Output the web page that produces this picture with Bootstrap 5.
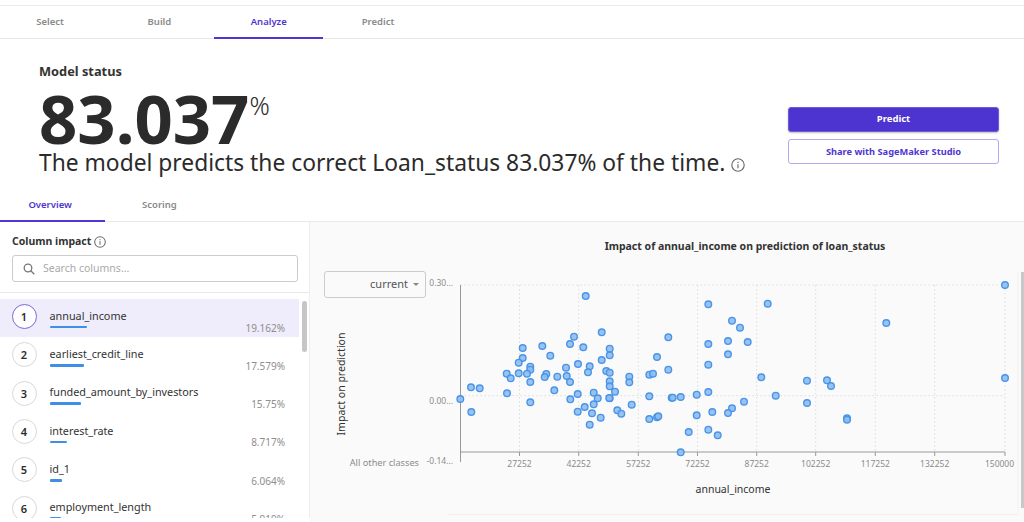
<!DOCTYPE html>
<html lang="en">
<head>
    <meta charset="UTF-8">
    <meta name="viewport" content="width=device-width, initial-scale=1.0">
    <title>Model status</title>
    <link href="https://cdn.jsdelivr.net/npm/bootstrap@5.3.0/dist/css/bootstrap.min.css" rel="stylesheet">
    <style>
        html, body { height: 522px; overflow: hidden; }
        body { font-family: "Noto Sans", "Liberation Sans", sans-serif; color: #2b2b2b; background: #fff; }
        .top-rule { height: 6px; border-bottom: 1px solid #eaeaea; }
        .step-tabs { height: 33px; border-bottom: 1px solid #e8e8e8; padding-left: 0; margin: 0; flex-wrap: nowrap; }
        .step-tab { width: 109.3px; text-align: center; font-size: 9.5px; font-weight: 600; color: #8a8a8a; line-height: 31px; height: 33px; }
        .step-tab:first-child { margin-left: -4.5px; }
        .step-tab.on { color: #4f35d2; border-bottom: 2px solid #4f35d2; }
        .head-block { height: 150px; padding: 23px 25px 0 39px; }
        .status-label { font-size: 12.8px; font-weight: 700; line-height: 18px; color: #333; }
        .big-score { font-size: 67px; font-weight: 700; line-height: 58px; margin-top: 9px; white-space: nowrap; }
        .big-score sup { font-size: 25px; font-weight: 300; top: -29px; vertical-align: baseline; position: relative; }
        .score-text { font-size: 22.8px; line-height: 30px; white-space: nowrap; margin-top: 1px; }
        .action-col { width: 211px; padding-top: 45px; }
        .btn-go, .btn-share { font-weight: 700; border-radius: 3px; padding: 0; width: 100%; display: block; }
        .btn-go { font-size: 9.5px; background: #4d33cf; color: #fff; height: 25px; border: 1px solid #6f5bd8; box-shadow: 0 1px 2px rgba(0,0,0,.25); }
        .btn-share { font-size: 9.25px; background: #fff; color: #4f35d2; height: 25px; margin-top: 7px; border: 1px solid #b4a8f0; }
        .left-pane { width: 310px; height: 296px; border-right: 1px solid #eee; overflow: hidden; position: relative; }
        .impact-title { font-size: 10.5px; font-weight: 700; color: #333; padding: 11px 0 0 12px; line-height: 16px; }
        .search-box { margin: 6px 11px 0 12px; height: 27px; border: 1px solid #ccc; border-radius: 3px; padding-left: 10px; font-size: 10.5px; color: #aaa; }
        .list-rule { border-bottom: 1px solid #e8e8e8; height: 11px; }
        .col-list { padding-top: 5.5px; width: 299px; }
        .col-row { height: 38.3px; padding: 0 14px 0 11.5px; position: relative; }
        .col-row.on { background: #efecfb; }
        .rank-dot { width: 25px; height: 25px; flex: none; border: 1px solid #d8d8d8; border-radius: 50%; background: #fff; font-size: 11px; font-weight: 600; text-align: center; line-height: 23px; margin-top: -2px; }
        .col-row.on .rank-dot { border-color: #7a66dd; }
        .col-name { font-size: 10.8px; line-height: 15px; margin-top: 1px; margin-left: 1px; white-space: nowrap; color: #333; }
        .col-bar { height: 2.5px; background: #3f8fe8; margin-top: 3px; margin-left: 1px; border-radius: 1px; }
        .col-pct { position: absolute; right: 14px; top: 22px; font-size: 10px; line-height: 14px; color: #8e8e8e; }
        .list-thumb { position: absolute; left: 302px; top: 79px; width: 5px; height: 51px; border-radius: 3px; background: #c6c6c6; }
        .right-pane { height: 300px; background: #fafafa; position: relative; min-width: 0; }
        .chart-title { font-size: 10.5px; font-weight: 700; text-align: center; color: #333; margin: 0; padding: 16px 0 0 156px; line-height: 16px; position: relative; }
        .chart-svg { display: block; position: absolute; left: 0; top: 0; }
        .chart-svg text { font-family: "Noto Sans", "Liberation Sans", sans-serif; }
        .class-select { position: absolute; left: 14px; top: 49px; width: 102px; height: 27px; border: 1px solid #ccc; border-radius: 3px; font-size: 11px; color: #555; padding-right: 6px; }
        .caret-down { width: 0; height: 0; border-left: 3.5px solid transparent; border-right: 3.5px solid transparent; border-top: 3.5px solid #888; margin-left: 5px; }
        .pane-thumb { position: absolute; right: 0; top: 50px; width: 3px; height: 236px; background: #c8c8c8; }
    </style>
</head>
<body>
    <div class="top-rule"></div>
    <div class="d-flex step-tabs">
        <div class="step-tab">Select</div>
        <div class="step-tab">Build</div>
        <div class="step-tab on">Analyze</div>
        <div class="step-tab">Predict</div>
    </div>
    <div class="d-flex justify-content-between head-block">
        <div>
            <div class="status-label">Model status</div>
            <div class="big-score">83.037<sup>%</sup></div>
            <div class="score-text">The model predicts the correct Loan_status 83.037% of the time.
                <svg width="14" height="14" viewBox="0 0 14 14" fill="none" stroke="#666" stroke-width="1.1"><circle cx="7" cy="7" r="6.2"/><path d="M7 6.2v4M7 3.8v1.1"/></svg>
            </div>
        </div>
        <div class="action-col flex-shrink-0">
            <button class="btn-go">Predict</button>
            <button class="btn-share">Share with SageMaker Studio</button>
        </div>
    </div>
    <div class="d-flex step-tabs">
        <div class="step-tab on">Overview</div>
        <div class="step-tab">Scoring</div>
    </div>
    <div class="d-flex">
        <div class="left-pane flex-shrink-0">
            <div class="impact-title">Column impact
                <svg width="12" height="12" viewBox="0 0 14 14" fill="none" stroke="#666" stroke-width="1.2"><circle cx="7" cy="7" r="6.2"/><path d="M7 6.2v4M7 3.8v1.1"/></svg>
            </div>
            <div class="search-box d-flex align-items-center gap-2">
                <svg width="12" height="12" viewBox="0 0 12 12" fill="none" stroke="#777" stroke-width="1.3"><circle cx="5" cy="5" r="3.8"/><path d="M7.8 7.8 11.3 11.3"/></svg>
                <span>Search columns...</span>
            </div>
            <div class="list-rule"></div>
            <div class="col-list">
                <div class="col-row on d-flex align-items-center gap-2"><div class="rank-dot me-1">1</div><div><div class="col-name">annual_income</div><div class="col-bar" style="width:37px"></div></div><div class="col-pct">19.162%</div></div>
                <div class="col-row d-flex align-items-center gap-2"><div class="rank-dot me-1">2</div><div><div class="col-name">earliest_credit_line</div><div class="col-bar" style="width:34px"></div></div><div class="col-pct">17.579%</div></div>
                <div class="col-row d-flex align-items-center gap-2"><div class="rank-dot me-1">3</div><div><div class="col-name">funded_amount_by_investors</div><div class="col-bar" style="width:31px"></div></div><div class="col-pct">15.75%</div></div>
                <div class="col-row d-flex align-items-center gap-2"><div class="rank-dot me-1">4</div><div><div class="col-name">interest_rate</div><div class="col-bar" style="width:17px"></div></div><div class="col-pct">8.717%</div></div>
                <div class="col-row d-flex align-items-center gap-2"><div class="rank-dot me-1">5</div><div><div class="col-name">id_1</div><div class="col-bar" style="width:12px"></div></div><div class="col-pct">6.064%</div></div>
                <div class="col-row d-flex align-items-center gap-2"><div class="rank-dot me-1">6</div><div><div class="col-name">employment_length</div><div class="col-bar" style="width:11px"></div></div><div class="col-pct">5.919%</div></div>
            </div>
            <div class="list-thumb"></div>
        </div>
        <div class="right-pane flex-grow-1">
            <svg class="chart-svg" id="chart" width="714" height="300" viewBox="310 222 714 300"></svg>
            <h6 class="chart-title">Impact of annual_income on prediction of loan_status</h6>
            <div class="class-select d-flex align-items-center justify-content-end">current<span class="caret-down"></span></div>
            <div class="pane-thumb"></div>
        </div>
    </div>
    <script>
        // points read off the picture, zoomed 3x from two crops
        const leftPts = [[797,198],[845,307],[762,320],[750,342],[667,348],[790,352],[608,354],[869,356],[869,376],[691,377],[608,384],[845,390],[596,398],[774,402],[631,410],[809,409],[738,413],[631,419],[859,423],[804,427],[869,428],[560,431],[596,430],[621,431],[679,432],[674,441],[712,440],[740,438],[572,445],[928,440],[869,454],[631,456],[750,456],[928,457],[869,469],[453,472],[479,475],[703,481],[885,485],[821,488],[561,490],[773,492],[833,505],[869,505],[868,504],[751,508],[421,507],[631,517],[821,523],[935,524],[794,531],[892,541],[454,546],[773,545],[816,550],[904,551],[842,563],[809,584],[988,434],[999,431],[1011,381],[1045,322],[1045,419],[988,499],[988,567],[1011,562],[1015,559],[1055,503]];
        const rightPts = [[115,223],[293,221],[1005,165],[186,272],[210,293],[649,279],[174,333],[233,336],[115,342],[174,373],[115,404],[274,442],[411,452],[471,451],[483,468],[1005,444],[115,486],[80,494],[32,501],[8,503],[317,497],[222,515],[411,519],[186,535],[127,546],[174,549],[80,556],[531,565],[531,569],[115,599],[56,606],[143,616],[32,667]];
        const gridX = [519.5, 578.7, 638.3, 697.5, 756.7, 815.7, 875.3, 934.7, 1005];
        const xLabels = ['27252', '42252', '57252', '72252', '87252', '102252', '117252', '132252', '150000'];

        let svg = '';
        gridX.forEach((x, i) => {
            const labelX = i === 8 ? 999.5 : x;
            svg += `<line x1="${x}" y1="285" x2="${x}" y2="452" stroke="#dcdcdc" stroke-dasharray="1.5 2.5"/>`;
            svg += `<line x1="${x}" y1="452" x2="${x}" y2="456" stroke="#999"/>`;
            svg += `<text x="${labelX}" y="467" font-size="8.5" fill="#8c8c8c" text-anchor="middle">${xLabels[i]}</text>`;
        });
        svg += '<line x1="460.5" y1="285" x2="1005" y2="285" stroke="#dcdcdc" stroke-dasharray="1.5 2.5"/>';
        svg += '<line x1="460.5" y1="395.7" x2="1005" y2="395.7" stroke="#dcdcdc" stroke-dasharray="1.5 2.5"/>';
        svg += '<line x1="460.5" y1="285" x2="460.5" y2="462" stroke="#999"/>';
        svg += '<line x1="460.5" y1="452" x2="1005" y2="452" stroke="#999"/>';
        [['0.30...', 286], ['0.00...', 404], ['-0.14...', 464]].forEach(l => {
            svg += `<text x="453" y="${l[1]}" font-size="8.5" fill="#8c8c8c" text-anchor="end">${l[0]}</text>`;
        });
        svg += '<text x="419" y="466" font-size="9.2" fill="#8c8c8c" text-anchor="end">All other classes</text>';
        svg += '<text transform="translate(345 384) rotate(-90)" font-size="10.5" fill="#333" text-anchor="middle">Impact on prediction</text>';
        svg += '<text x="733" y="493" font-size="10.5" fill="#333" text-anchor="middle">annual_income</text>';
        const dot = (x, y) => `<circle cx="${x.toFixed(1)}" cy="${y.toFixed(1)}" r="3.3" fill="#8dbcf0" fill-opacity="0.9" stroke="#4a94e8" stroke-width="1.4"/>`;
        leftPts.forEach(p => { svg += dot(320 + p[0] / 3, 230 + p[1] / 3); });
        rightPts.forEach(p => { svg += dot(670 + p[0] / 3, 230 + p[1] / 3); });
        svg += '<path d="M447 514.5H1018V272" fill="none" stroke="#f0f0f0"/>';
        document.getElementById('chart').innerHTML = svg;
    </script>
    <script src="https://cdn.jsdelivr.net/npm/bootstrap@5.3.0/dist/js/bootstrap.bundle.min.js"></script>
</body>
</html>
